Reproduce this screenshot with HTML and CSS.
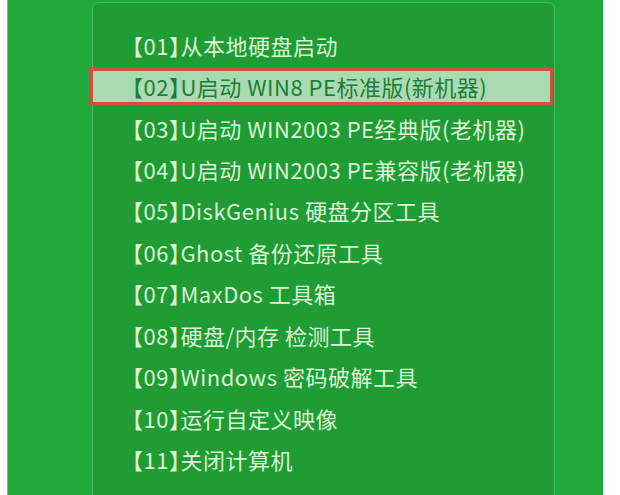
FILE: index.html
```html
<!DOCTYPE html>
<html>
<head>
<meta charset="utf-8">
<link rel="stylesheet" href="styles.css">
</head>
<body>
<div class="screen">
  <div class="panel">
    <ul class="menu">
      <li class="item">【01】从本地硬盘启动</li>
      <li class="item selected"><span class="box">【02】U启动 WIN8 PE标准版(新机器)</span></li>
      <li class="item">【03】U启动 WIN2003 PE经典版(老机器)</li>
      <li class="item">【04】U启动 WIN2003 PE兼容版(老机器)</li>
      <li class="item">【05】DiskGenius 硬盘分区工具</li>
      <li class="item">【06】Ghost 备份还原工具</li>
      <li class="item">【07】MaxDos 工具箱</li>
      <li class="item">【08】硬盘/内存 检测工具</li>
      <li class="item">【09】Windows 密码破解工具</li>
      <li class="item">【10】运行自定义映像</li>
      <li class="item">【11】关闭计算机</li>
    </ul>
  </div>
</div>
</body>
</html>
```
FILE: styles.css
```css
html, body {
  margin: 0;
  padding: 0;
  background: #ffffff;
}
body {
  width: 620px;
  height: 495px;
  overflow: hidden;
}
.screen {
  margin-left: 7px;
  width: 596px;
  height: 495px;
  background: #22a73b;
  overflow: hidden;
  box-shadow: inset 1px 0 0 #5fd27a;
}
.panel {
  margin-left: 85px;
  margin-top: 2px;
  width: 461px;
  height: 520px;
  border: 1px solid #45bd5c;
  border-radius: 7px 7px 0 0;
  background: #1f9c34;
  padding-top: 21px;
  box-sizing: content-box;
}
.menu {
  list-style: none;
  margin: 0;
  padding: 0;
}
.item {
  height: 41.45px;
  display: flex;
  align-items: center;
  padding-left: 39px;
  font-family: "Noto Sans CJK SC", "Noto Sans", sans-serif;
  font-feature-settings: "halt";
  font-size: 22px;
  letter-spacing: 0.5px;
  color: #d9f5d5;
  white-space: nowrap;
}
.item.selected {
  padding-left: 0;
  margin-left: -3px;
}
.box {
  display: flex;
  align-items: center;
  width: 463px;
  height: 37px;
  box-sizing: border-box;
  padding-left: 39px;
  background: #a9dbb0;
  border: 3px solid #c9533f;
  color: #1f7d3a;
}
```
